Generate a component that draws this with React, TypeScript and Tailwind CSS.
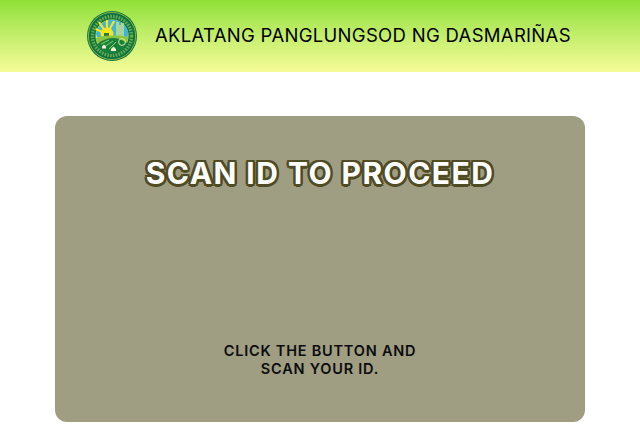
function Seal() {
  return (
    <svg width="50" height="50" viewBox="0 0 50 50" className="shrink-0">
      <circle cx="25" cy="25" r="25" fill="#0d7440" />
      <circle cx="25" cy="25" r="23.6" fill="none" stroke="#e3d94a" strokeWidth="0.6" />
      <circle cx="25" cy="25" r="19.5" fill="none" stroke="#b8d85a" strokeWidth="3.4" strokeDasharray="1.6 1.2" opacity="0.55" />
      <circle cx="25" cy="25" r="16.5" fill="#e8ee70" />
      <path d="M9 23a16.5 16.5 0 0 1 32.5-1l-1 4H10z" fill="#3fb5d8" />
      <g stroke="#f6e622" strokeWidth="2.2">
        <path d="M20 23 L20 9" />
        <path d="M20 23 L12 11" />
        <path d="M20 23 L8.5 18" />
        <path d="M20 23 L27 10" />
      </g>
      <circle cx="20" cy="23" r="6.5" fill="#f6e622" />
      <path d="M17 22h5v3h-5z" fill="#2c7a40" />
      <path d="M29 11h3v3h2v-2h3v14h-8z" fill="#a9d49a" />
      <path d="M8.8 27c8-3 22-3 32.6-1a16.5 16.5 0 0 1-32.6 1z" fill="#8cc63f" />
      <path d="M10.5 33c7-6 15-7 22-5l8 4a16.5 16.5 0 0 1-30 1z" fill="#17803a" />
      <path d="M14 33l8-4M17 36l9-6M22 38l7-7" stroke="#b6e07a" strokeWidth="0.8" />
      <circle cx="35" cy="31" r="3.4" fill="none" stroke="#d8e8a0" strokeWidth="1" />
      <path d="M24 38l2.5-2.5 2.5 2.5v2h-5zM15 35.5l2-2 2 2v2h-4z" fill="#f4f2d0" />
    </svg>
  );
}

export default function App() {
  return (
    <div className="h-[427px] w-[640px] overflow-hidden bg-white font-['Inter','Liberation_Sans',sans-serif]">
      <header className="flex h-[72px] items-center bg-gradient-to-b from-[#8ee034] to-[#f6fc98] pl-[87px]">
        <Seal />
        <h1 className="ml-[18px] text-[18.5px] tracking-[0.3px] whitespace-nowrap text-black">
          AKLATANG PANGLUNGSOD NG DASMARIÑAS
        </h1>
      </header>

      <main className="mx-[55px] mt-[44px] flex h-[306px] flex-col items-center rounded-xl bg-[#9f9d82]">
        <h2 className="mt-[39px] text-[30px] leading-9 font-bold tracking-[1.45px] whitespace-nowrap text-white [text-shadow:-2px_-2px_0_#4f4b25,2px_-2px_0_#4f4b25,-2px_2px_0_#4f4b25,2px_2px_0_#4f4b25,0_2.5px_0_#4f4b25,2.5px_0_0_#4f4b25,-2.5px_0_0_#4f4b25,0_-2.5px_0_#4f4b25]">
          SCAN ID TO PROCEED
        </h2>
        <p className="mt-[151px] text-center text-[14.5px] leading-[18px] font-semibold tracking-[0.78px] text-[#0c0c0c]">
          CLICK THE BUTTON AND
          <br />
          SCAN YOUR ID.
        </p>
      </main>
    </div>
  );
}
